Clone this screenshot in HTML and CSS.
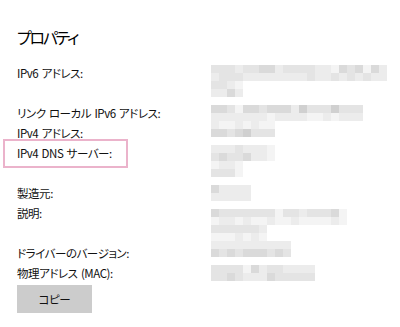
FILE: index.html
```html
<!DOCTYPE html>
<html lang="ja">
<head>
<meta charset="utf-8">
<link rel="stylesheet" href="styles.css">
</head>
<body>
<div class="page">
  <h1 class="title">プロパティ</h1>
  <div class="props">
    <div class="labels">
      <div class="label">IPv6 アドレス:</div>
      <div class="label blank"></div>
      <div class="label">リンク ローカル IPv6 アドレス:</div>
      <div class="label">IPv4 アドレス:</div>
      <div class="label highlight">IPv4 DNS サーバー:</div>
      <div class="label blank"></div>
      <div class="label">製造元:</div>
      <div class="label">説明:</div>
      <div class="label blank"></div>
      <div class="label">ドライバーのバージョン:</div>
      <div class="label">物理アドレス (MAC):</div>
      <button class="copy">コピー</button>
    </div>
    <svg class="values" width="176" height="216" viewBox="0 0 176 216" aria-hidden="true">
      <rect class="m3" x="0" y="0" width="176" height="8"/>
      <rect class="m2" x="24" y="0" width="8" height="8"/>
      <rect class="m4" x="48" y="0" width="16" height="8"/>
      <rect class="m2" x="64" y="0" width="8" height="8"/>
      <rect class="m2" x="104" y="0" width="16" height="8"/>
      <rect class="m1" x="120" y="0" width="8" height="8"/>
      <rect class="m4" x="128" y="0" width="8" height="8"/>
      <rect class="m4" x="144" y="0" width="8" height="8"/>
      <rect class="m1" x="152" y="0" width="8" height="8"/>
      <rect class="m4" x="160" y="0" width="8" height="8"/>
      <rect class="m2" x="168" y="0" width="8" height="8"/>

      <rect class="m2" x="0" y="8" width="176" height="8"/>
      <rect class="m3" x="8" y="8" width="24" height="8"/>
      <rect class="m3" x="96" y="8" width="8" height="8"/>
      <rect class="m3" x="120" y="8" width="8" height="8"/>
      <rect class="m3" x="136" y="8" width="8" height="8"/>
      <rect class="m3" x="152" y="8" width="8" height="8"/>

      <rect class="m3" x="0" y="16" width="16" height="8"/>
      <rect class="m2" x="16" y="16" width="8" height="8"/>
      <rect class="m1" x="24" y="16" width="8" height="8"/>
      <rect class="m2" x="0" y="24" width="32" height="8"/>
      <rect class="m4" x="16" y="24" width="8" height="8"/>

      <rect class="m4" x="0" y="40" width="152" height="8"/>
      <rect class="m3" x="16" y="40" width="8" height="8"/>
      <rect class="m1" x="24" y="40" width="8" height="8"/>
      <rect class="m3" x="48" y="40" width="8" height="8"/>
      <rect class="m2" x="80" y="40" width="8" height="8"/>
      <rect class="m5" x="88" y="40" width="8" height="8"/>
      <rect class="m3" x="96" y="40" width="24" height="8"/>
      <rect class="m5" x="120" y="40" width="8" height="8"/>
      <rect class="m3" x="128" y="40" width="24" height="8"/>

      <rect class="m2" x="0" y="48" width="152" height="8"/>
      <rect class="m1" x="56" y="48" width="8" height="8"/>
      <rect class="m1" x="96" y="48" width="16" height="8"/>
      <rect class="m1" x="120" y="48" width="8" height="8"/>

      <rect class="m1" x="0" y="56" width="64" height="8"/>
      <rect class="m2" x="0" y="56" width="8" height="8"/>
      <rect class="m2" x="24" y="56" width="8" height="8"/>
      <rect class="m2" x="40" y="56" width="8" height="8"/>

      <rect class="m3" x="0" y="64" width="64" height="8"/>
      <rect class="m4" x="0" y="64" width="16" height="8"/>
      <rect class="m4" x="24" y="64" width="8" height="8"/>
      <rect class="m5" x="32" y="64" width="8" height="8"/>

      <rect class="m2" x="0" y="80" width="64" height="8"/>
      <rect class="m3" x="24" y="80" width="8" height="8"/>
      <rect class="m1" x="56" y="80" width="8" height="8"/>

      <rect class="m3" x="0" y="88" width="64" height="8"/>
      <rect class="m4" x="8" y="88" width="8" height="8"/>
      <rect class="m4" x="32" y="88" width="8" height="8"/>
      <rect class="m2" x="40" y="88" width="16" height="8"/>
      <rect class="m1" x="56" y="88" width="8" height="8"/>

      <rect class="m1" x="0" y="96" width="32" height="8"/>
      <rect class="m2" x="8" y="96" width="16" height="8"/>
      <rect class="m3" x="0" y="104" width="24" height="8"/>
      <rect class="m1" x="24" y="104" width="8" height="8"/>

      <rect class="m2" x="0" y="120" width="40" height="8"/>
      <rect class="m4" x="0" y="120" width="8" height="8"/>
      <rect class="m2" x="0" y="128" width="40" height="8"/>

      <rect class="m3" x="0" y="144" width="136" height="8"/>
      <rect class="m4" x="0" y="144" width="8" height="8"/>
      <rect class="m1" x="64" y="144" width="8" height="8"/>
      <rect class="m2" x="88" y="144" width="8" height="8"/>
      <rect class="m4" x="120" y="144" width="8" height="8"/>
      <rect class="m1" x="128" y="144" width="8" height="8"/>

      <rect class="m1" x="0" y="152" width="136" height="8"/>
      <rect class="m2" x="8" y="152" width="16" height="8"/>
      <rect class="m2" x="32" y="152" width="8" height="8"/>
      <rect class="m2" x="56" y="152" width="8" height="8"/>
      <rect class="m2" x="80" y="152" width="8" height="8"/>
      <rect class="m2" x="120" y="152" width="8" height="8"/>

      <rect class="m3" x="0" y="160" width="56" height="8"/>
      <rect class="m2" x="48" y="160" width="8" height="8"/>
      <rect class="m1" x="0" y="168" width="56" height="8"/>
      <rect class="m2" x="24" y="168" width="8" height="8"/>
      <rect class="m2" x="40" y="168" width="8" height="8"/>

      <rect class="m2" x="0" y="176" width="80" height="8"/>
      <rect class="m4" x="0" y="184" width="80" height="8"/>
      <rect class="m3" x="8" y="184" width="8" height="8"/>
      <rect class="m3" x="24" y="184" width="8" height="8"/>
      <rect class="m3" x="56" y="184" width="8" height="8"/>
      <rect class="m3" x="72" y="184" width="8" height="8"/>

      <rect class="m3" x="0" y="200" width="104" height="8"/>
      <rect class="m1" x="32" y="200" width="8" height="8"/>
      <rect class="m4" x="40" y="200" width="8" height="8"/>
      <rect class="m2" x="48" y="200" width="8" height="8"/>
      <rect class="m2" x="72" y="200" width="32" height="8"/>

      <rect class="m3" x="0" y="208" width="104" height="8"/>
      <rect class="m4" x="16" y="208" width="8" height="8"/>
      <rect class="m2" x="32" y="208" width="24" height="8"/>
      <rect class="m4" x="56" y="208" width="8" height="8"/>
    </svg>
  </div>
</div>
</body>
</html>
```

FILE: styles.css
```css
html, body {
  margin: 0;
  padding: 0;
  background: #ffffff;
}

body {
  font-family: "Noto Sans CJK JP", "Noto Sans", sans-serif;
  color: #000000;
  font-feature-settings: "palt";
}

.page {
  padding: 26px 0 0 17px;
}

.title {
  margin: 0;
  font-size: 16px;
  font-weight: 400;
  line-height: 22px;
  letter-spacing: -2.2px;
  color: #000000;
}

.props {
  display: flex;
  align-items: flex-start;
  margin-top: 15px;
}

.labels {
  width: 194px;
  display: flex;
  flex-direction: column;
  align-items: flex-start;
}

.label {
  font-size: 11.5px;
  line-height: 20px;
  height: 20px;
  letter-spacing: -0.45px;
  word-spacing: 1.2px;
  white-space: nowrap;
  color: #111111;
}

.highlight {
  position: relative;
}

.highlight::after {
  content: "";
  position: absolute;
  left: -14px;
  top: -4px;
  width: 121px;
  height: 25px;
  border: 2px solid #ebb3cb;
}

.copy {
  margin-top: 2px;
  width: 75px;
  height: 28px;
  border: none;
  background: #cccccc;
  font-family: inherit;
  font-feature-settings: "palt";
  font-size: 11.5px;
  letter-spacing: -0.45px;
  color: #111111;
  padding: 0;
}

.values {
  display: block;
  margin-top: 2px;
}

.m1 { fill: #f4f4f4; }
.m2 { fill: #ececec; }
.m3 { fill: #e4e4e4; }
.m4 { fill: #dadada; }
.m5 { fill: #d0d0d0; }
```
